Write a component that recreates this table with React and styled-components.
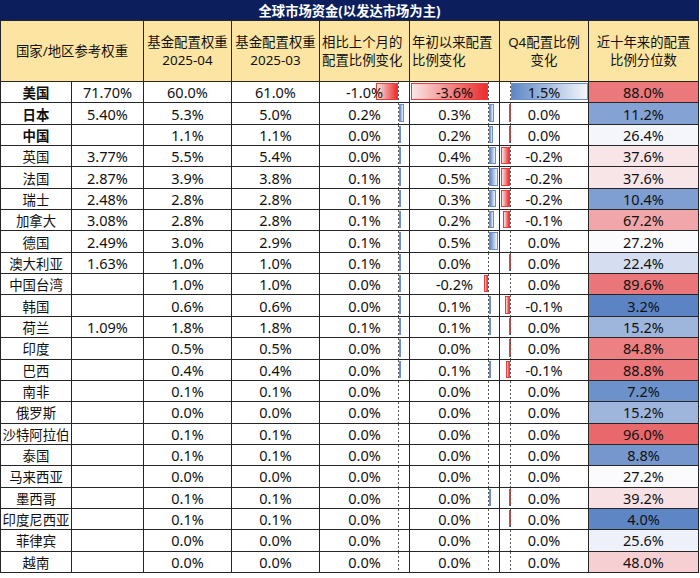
import styled, { createGlobalStyle } from "styled-components";

const GlobalStyle = createGlobalStyle`
  * { box-sizing: border-box; }
  body {
    margin: 0;
    background: #fff;
    font-family: "Noto Sans", "Noto Sans CJK SC", sans-serif;
    color: #111;
  }
`;

const COLS = "72px 72px 88px 88px 90px 90px 89px 110px";
const LINE = "#262626";

const Sheet = styled.div`
  width: 699px;
`;

const Title = styled.div`
  height: 21px;
  background: #0c1f5c;
  color: #fff;
  font-weight: 700;
  font-size: 13.3px;
  display: flex;
  align-items: center;
  justify-content: center;
  border-bottom: 1px solid ${LINE};
`;

const HeadRow = styled.div`
  display: grid;
  grid-template-columns: ${COLS};
  height: 61px;
`;

const HeadCell = styled.div`
  grid-column: span ${(p) => p.$span || 1};
  background: #fce5a2;
  border-right: 1px solid ${LINE};
  border-bottom: 1px solid ${LINE};
  border-left: ${(p) => (p.$first ? `1px solid ${LINE}` : "none")};
  display: flex;
  flex-direction: column;
  justify-content: center;
  align-items: ${(p) => (p.$left ? "flex-start" : "center")};
  padding-left: ${(p) => (p.$left ? "2px" : "0")};
  font-size: 13.4px;
  line-height: 18.5px;
  text-align: center;
  white-space: nowrap;
`;

const Body = styled.div`
  display: grid;
  grid-template-rows: repeat(23, 1fr);
  height: 491px;
`;

const Row = styled.div`
  display: grid;
  grid-template-columns: ${COLS};
`;

const Cell = styled.div`
  position: relative;
  border-right: 1px solid ${LINE};
  border-bottom: 1px solid ${LINE};
  border-left: ${(p) => (p.$first ? `1px solid ${LINE}` : "none")};
  background: ${(p) => p.$bg || "#fff"};
  display: flex;
  align-items: center;
  justify-content: center;
  font-size: 14.5px;
  font-weight: ${(p) => (p.$bold ? 700 : 400)};
  white-space: nowrap;
  overflow: hidden;
`;

const NameText = styled.span`
  font-size: 13.4px;
`;

const Value = styled.span`
  position: relative;
  z-index: 1;
`;

const Axis = styled.div`
  position: absolute;
  top: 0;
  bottom: 0;
  width: 1px;
  background: repeating-linear-gradient(
    to bottom,
    #555 0 2px,
    transparent 2px 4px
  );
`;

const Bar = styled.div`
  position: absolute;
  top: 1px;
  bottom: 2px;
  border: 1px solid ${(p) => (p.$neg ? "#ee3a3a" : "#6a8fc9")};
  background: ${(p) =>
    p.$neg
      ? "linear-gradient(to left, #ec2c2c, #fbe6e6)"
      : "linear-gradient(to right, #5f87c5, #f3f6fb)"};
`;

// axis offset (px from cell left) and px per 1%
const BAR_COLS = [
  { axis: 78, scale: 22 },
  { axis: 78, scale: 21.4 },
  { axis: 10, scale: 51 },
];

const rows = [
  ["美国", "71.70%", "60.0%", "61.0%", ["-1.0%", -1.0], ["-3.6%", -3.6], ["1.5%", 1.5], 88.0, true],
  ["日本", "5.40%", "5.3%", "5.0%", ["0.2%", 0.22], ["0.3%", 0.22], ["0.0%", -0.02], 11.2, true],
  ["中国", "", "1.1%", "1.1%", ["0.0%", 0.03], ["0.2%", 0.18], ["0.0%", -0.02], 26.4, true],
  ["英国", "3.77%", "5.5%", "5.4%", ["0.0%", 0.05], ["0.4%", 0.32], ["-0.2%", -0.18], 37.6],
  ["法国", "2.87%", "3.9%", "3.8%", ["0.1%", 0.1], ["0.5%", 0.4], ["-0.2%", -0.18], 37.6],
  ["瑞士", "2.48%", "2.8%", "2.8%", ["0.1%", 0.08], ["0.3%", 0.35], ["-0.2%", -0.17], 10.4],
  ["加拿大", "3.08%", "2.8%", "2.8%", ["0.1%", 0.07], ["0.2%", 0.22], ["-0.1%", -0.13], 67.2],
  ["德国", "2.49%", "3.0%", "2.9%", ["0.1%", 0.07], ["0.5%", 0.4], ["0.0%", 0], 27.2],
  ["澳大利亚", "1.63%", "1.0%", "1.0%", ["0.1%", 0.06], ["0.0%", 0], ["0.0%", -0.02], 22.4],
  ["中国台湾", "", "1.0%", "1.0%", ["0.0%", 0.04], ["-0.2%", -0.18], ["0.0%", 0], 89.6],
  ["韩国", "", "0.6%", "0.6%", ["0.0%", 0.04], ["0.1%", 0.1], ["-0.1%", -0.1], 3.2],
  ["荷兰", "1.09%", "1.8%", "1.8%", ["0.1%", 0.07], ["0.1%", 0.1], ["0.0%", -0.02], 15.2],
  ["印度", "", "0.5%", "0.5%", ["0.0%", 0.04], ["0.0%", 0], ["0.0%", -0.02], 84.8],
  ["巴西", "", "0.4%", "0.4%", ["0.0%", 0.04], ["0.1%", 0.1], ["-0.1%", -0.07], 88.8],
  ["南非", "", "0.1%", "0.1%", ["0.0%", 0], ["0.0%", 0], ["0.0%", 0], 7.2],
  ["俄罗斯", "", "0.0%", "0.0%", ["0.0%", 0], ["0.0%", 0], ["0.0%", 0], 15.2],
  ["沙特阿拉伯", "", "0.1%", "0.1%", ["0.0%", 0], ["0.0%", 0], ["0.0%", 0], 96.0],
  ["泰国", "", "0.1%", "0.1%", ["0.0%", 0], ["0.0%", 0], ["0.0%", 0], 8.8],
  ["马来西亚", "", "0.0%", "0.0%", ["0.0%", 0], ["0.0%", 0], ["0.0%", 0], 27.2],
  ["墨西哥", "", "0.1%", "0.1%", ["0.0%", 0], ["0.0%", 0.03], ["0.0%", -0.02], 39.2],
  ["印度尼西亚", "", "0.1%", "0.1%", ["0.0%", 0], ["0.0%", 0], ["0.0%", -0.02], 4.0],
  ["菲律宾", "", "0.0%", "0.0%", ["0.0%", 0], ["0.0%", 0], ["0.0%", 0], 25.6],
  ["越南", "", "0.0%", "0.0%", ["0.0%", 0], ["0.0%", 0], ["0.0%", 0], 48.0],
];

const BLUE = [92, 132, 196];
const WHITE = [251, 251, 254];
const RED = [233, 104, 107];

function mix(a, b, t) {
  const c = a.map((v, i) => Math.round(v + (b[i] - v) * t));
  return `rgb(${c[0]}, ${c[1]}, ${c[2]})`;
}

function heat(v) {
  const min = 3.2, mid = 27.2, max = 96;
  if (v <= mid) return mix(BLUE, WHITE, Math.pow((v - min) / (mid - min), 1.25));
  return mix(WHITE, RED, (v - mid) / (max - mid));
}

function BarCell({ text, value, col }) {
  const { axis, scale } = BAR_COLS[col];
  const w = value === 0 ? 0 : Math.max(1, Math.round(Math.abs(value) * scale));
  const neg = value < 0;
  return (
    <Cell>
      {w > 0 && (
        <Bar
          $neg={neg}
          style={neg ? { left: axis - w, width: w } : { left: axis + 1, width: w }}
        />
      )}
      <Axis style={{ left: axis }} />
      <Value>{text}</Value>
    </Cell>
  );
}

export default function App() {
  return (
    <Sheet>
      <GlobalStyle />
      <Title>全球市场资金(以发达市场为主)</Title>
      <HeadRow>
        <HeadCell $span={2} $first>国家/地区参考权重</HeadCell>
        <HeadCell>
          <div>基金配置权重</div>
          <div>2025-04</div>
        </HeadCell>
        <HeadCell>
          <div>基金配置权重</div>
          <div>2025-03</div>
        </HeadCell>
        <HeadCell $left>
          <div>相比上个月的</div>
          <div>配置比例变化</div>
        </HeadCell>
        <HeadCell $left>
          <div>年初以来配置</div>
          <div>比例变化</div>
        </HeadCell>
        <HeadCell>
          <div>Q4配置比例</div>
          <div>变化</div>
        </HeadCell>
        <HeadCell>
          <div>近十年来的配置</div>
          <div>比例分位数</div>
        </HeadCell>
      </HeadRow>
      <Body>
        {rows.map((r) => (
          <Row key={r[0]}>
            <Cell $first $bold={r[8]}>
              <NameText>{r[0]}</NameText>
            </Cell>
            <Cell>{r[1]}</Cell>
            <Cell>{r[2]}</Cell>
            <Cell>{r[3]}</Cell>
            <BarCell text={r[4][0]} value={r[4][1]} col={0} />
            <BarCell text={r[5][0]} value={r[5][1]} col={1} />
            <BarCell text={r[6][0]} value={r[6][1]} col={2} />
            <Cell $bg={heat(r[7])}>{r[7].toFixed(1)}%</Cell>
          </Row>
        ))}
      </Body>
    </Sheet>
  );
}
